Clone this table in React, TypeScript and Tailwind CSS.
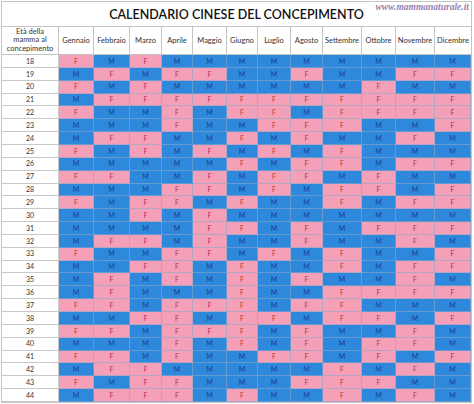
import React from 'react'

const months = [
  'Gennaio',
  'Febbraio',
  'Marzo',
  'Aprile',
  'Maggio',
  'Giugno',
  'Luglio',
  'Agosto',
  'Settembre',
  'Ottobre',
  'Novembre',
  'Dicembre',
]

// età -> sesso per mese (gen..dic)
const rows: [number, string][] = [
  [18, 'FMFMMMMMMMMM'],
  [19, 'MFMFFMMFMMFF'],
  [20, 'FMFMMMMMMFMM'],
  [21, 'MFFFFFFFFFFF'],
  [22, 'FMMFMFFMFFFF'],
  [23, 'MMMFMMFFFMMF'],
  [24, 'MFFMMFMFMMFM'],
  [25, 'FMFMFMFMFMMM'],
  [26, 'MMMMMFMFFMFF'],
  [27, 'FFMMFMFFMFMM'],
  [28, 'MMMFFMFMFFMF'],
  [29, 'FMFFMFMMFMFF'],
  [30, 'MMFMFMMMMMMM'],
  [31, 'MMMMFFMFMFFF'],
  [32, 'MFFMFMMFMMFM'],
  [33, 'FMMFFMFMFMMF'],
  [34, 'MMFFMFMMFMFF'],
  [35, 'MFMFMFMFMMFM'],
  [36, 'MFMMMFMMFFFF'],
  [37, 'FFMFFFMFFMMM'],
  [38, 'MMFFMFFMFFMF'],
  [39, 'FFMFFFMFMMFM'],
  [40, 'MMMFMFMFMFFM'],
  [41, 'FFMFMMFFMFMF'],
  [42, 'MFFMMMMMFMFM'],
  [43, 'FMFFMMMFFFMM'],
  [44, 'MFFFMFMMFMFM'],
]

const cols =
  'grid grid-cols-[57px_35px_36px_32px_31px_34px_31px_33px_32px_39px_34px_39px_36px]'

export default function App() {
  return (
    <div
      className="h-[404px] w-[474px] overflow-hidden bg-white pl-[1px] pt-[1px]"
      style={{ fontFamily: 'Lato, "Open Sans", sans-serif' }}
    >
      <div className="w-[471px] border border-[#c4c4c4]">
        {/* titolo */}
        <div className="grid h-[25px] grid-cols-[1fr_auto_1fr] border-b border-[#c4c4c4]">
          <div />
          <div className="self-center pt-[3px] text-[12.5px] font-semibold text-[#111]">
            CALENDARIO CINESE DEL CONCEPIMENTO
          </div>
          <div
            className="justify-self-end pr-[2px] pt-[1px] text-[9.5px] font-bold italic leading-none text-[#9a80b0]"
            style={{ fontFamily: '"Liberation Serif", serif' }}
          >
            www.mammanaturale.it
          </div>
        </div>

        {/* intestazione */}
        <div className={`${cols} h-[28px] border-b border-[#c4c4c4] text-[7.5px] text-[#333]`}>
          <div className="flex flex-col items-center justify-center border-r border-[#c4c4c4] leading-[8.5px]">
            <span>Età della</span>
            <span>mamma al</span>
            <span>concepimento</span>
          </div>
          {months.map((m, i) => (
            <div
              key={m}
              className={`flex items-center justify-center ${i < 11 ? 'border-r border-[#c4c4c4]' : ''}`}
            >
              {m}
            </div>
          ))}
        </div>

        {/* tabella */}
        <div className={`${cols} h-[347px] grid-rows-[repeat(27,minmax(0,1fr))] text-[7px]`}>
          {rows.map(([age, sexes]) => (
            <React.Fragment key={age}>
              <div className="flex items-center justify-center border-b border-r border-[#c9c9c9] text-[#333]">
                {age}
              </div>
              {sexes.split('').map((s, i) => (
                <div
                  key={i}
                  className={`flex items-center justify-center border-b border-r border-[#8ea6c4]/60 ${
                    s === 'F' ? 'bg-[#f4a0b8] text-[#b8323d]' : 'bg-[#2e88dc] text-[#1b3f8f]'
                  }`}
                >
                  {s}
                </div>
              ))}
            </React.Fragment>
          ))}
        </div>
      </div>
    </div>
  )
}
